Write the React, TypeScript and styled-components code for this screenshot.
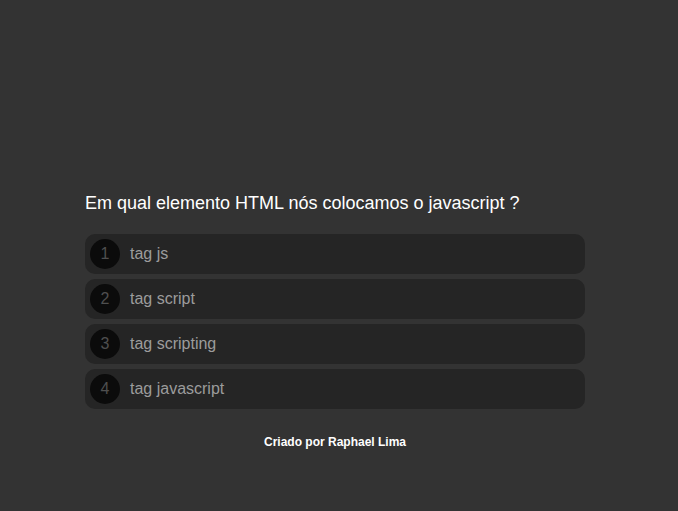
import React from "react";
import styled, { createGlobalStyle } from "styled-components";

const Global = createGlobalStyle`
  html, body { margin: 0; padding: 0; background: #333333; }
  body { font-family: "Liberation Sans", Arial, sans-serif; }
`;

const Page = styled.div`
  min-height: 511px;
  display: flex;
  justify-content: center;
  padding: 192px 8px 0 0;
  box-sizing: border-box;
`;

const Quiz = styled.div`
  width: 500px;
  display: flex;
  flex-direction: column;
`;

const Question = styled.h1`
  margin: 0 0 20px 0;
  font-size: 18px;
  font-weight: normal;
  color: #ffffff;
  line-height: 22px;
`;

const Options = styled.div`
  display: flex;
  flex-direction: column;
  gap: 5px;
`;

const Option = styled.div`
  height: 40px;
  background: #252525;
  border-radius: 10px;
  display: flex;
  align-items: center;
  padding-left: 5px;
  gap: 10px;
`;

const Number = styled.span`
  width: 30px;
  height: 30px;
  border-radius: 50%;
  background: #0b0b0b;
  color: #4f4f4f;
  display: flex;
  align-items: center;
  justify-content: center;
  font-size: 16px;
`;

const Label = styled.span`
  color: #9c9c9c;
  font-size: 16px;
`;

const Footer = styled.footer`
  margin-top: 26px;
  text-align: center;
  color: #ffffff;
  font-size: 12px;
  font-weight: bold;
`;

const options = ["tag js", "tag script", "tag scripting", "tag javascript"];

export default function App() {
  return (
    <>
      <Global />
      <Page>
        <Quiz>
          <Question>Em qual elemento HTML nós colocamos o javascript ?</Question>
          <Options>
            {options.map((o, i) => (
              <Option key={o}>
                <Number>{i + 1}</Number>
                <Label>{o}</Label>
              </Option>
            ))}
          </Options>
          <Footer>Criado por Raphael Lima</Footer>
        </Quiz>
      </Page>
    </>
  );
}
